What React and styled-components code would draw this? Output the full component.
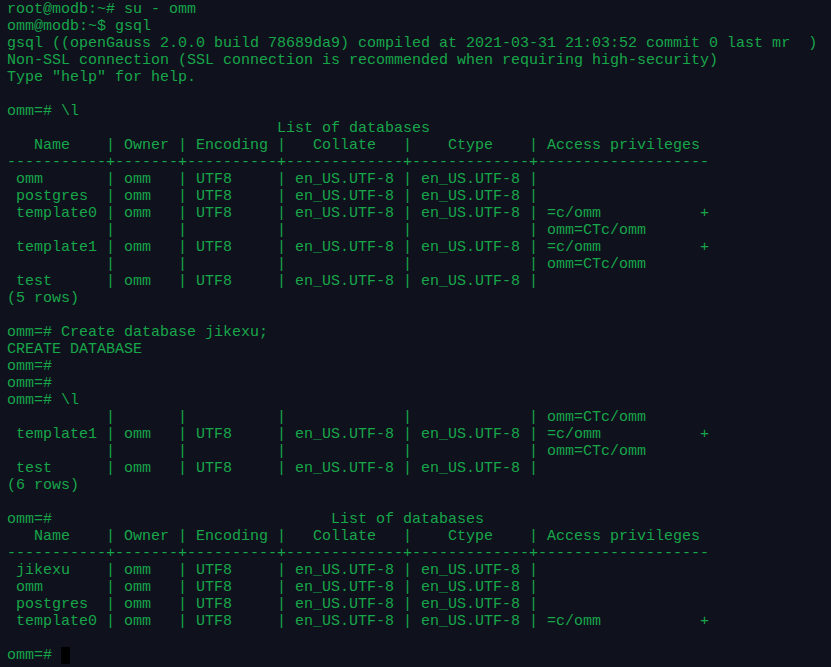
import React from "react";
import styled, { createGlobalStyle } from "styled-components";

const Global = createGlobalStyle`
  html, body {
    margin: 0;
    padding: 0;
    background: #0f111d;
  }
`;

const Terminal = styled.div`
  width: 831px;
  height: 667px;
  box-sizing: border-box;
  padding: 1px 0 0 7px;
  background: #0f111d;
  color: #18a64a;
  font-family: "Liberation Mono", "Courier New", monospace;
  font-size: 15px;
  line-height: 17px;
  overflow: hidden;
`;

const Line = styled.div`
  white-space: pre;
  height: 17px;
`;

const Cursor = styled.span`
  display: inline-block;
  width: 9px;
  height: 17px;
  vertical-align: top;
  background: #000000;
`;

const lines = [
  "root@modb:~# su - omm",
  "omm@modb:~$ gsql",
  "gsql ((openGauss 2.0.0 build 78689da9) compiled at 2021-03-31 21:03:52 commit 0 last mr  )",
  "Non-SSL connection (SSL connection is recommended when requiring high-security)",
  'Type "help" for help.',
  "",
  "omm=# \\l",
  "                              List of databases",
  "   Name    | Owner | Encoding |   Collate   |    Ctype    | Access privileges",
  "-----------+-------+----------+-------------+-------------+-------------------",
  " omm       | omm   | UTF8     | en_US.UTF-8 | en_US.UTF-8 |",
  " postgres  | omm   | UTF8     | en_US.UTF-8 | en_US.UTF-8 |",
  " template0 | omm   | UTF8     | en_US.UTF-8 | en_US.UTF-8 | =c/omm           +",
  "           |       |          |             |             | omm=CTc/omm",
  " template1 | omm   | UTF8     | en_US.UTF-8 | en_US.UTF-8 | =c/omm           +",
  "           |       |          |             |             | omm=CTc/omm",
  " test      | omm   | UTF8     | en_US.UTF-8 | en_US.UTF-8 |",
  "(5 rows)",
  "",
  "omm=# Create database jikexu;",
  "CREATE DATABASE",
  "omm=#",
  "omm=#",
  "omm=# \\l",
  "           |       |          |             |             | omm=CTc/omm",
  " template1 | omm   | UTF8     | en_US.UTF-8 | en_US.UTF-8 | =c/omm           +",
  "           |       |          |             |             | omm=CTc/omm",
  " test      | omm   | UTF8     | en_US.UTF-8 | en_US.UTF-8 |",
  "(6 rows)",
  "",
  "omm=#                               List of databases",
  "   Name    | Owner | Encoding |   Collate   |    Ctype    | Access privileges",
  "-----------+-------+----------+-------------+-------------+-------------------",
  " jikexu    | omm   | UTF8     | en_US.UTF-8 | en_US.UTF-8 |",
  " omm       | omm   | UTF8     | en_US.UTF-8 | en_US.UTF-8 |",
  " postgres  | omm   | UTF8     | en_US.UTF-8 | en_US.UTF-8 |",
  " template0 | omm   | UTF8     | en_US.UTF-8 | en_US.UTF-8 | =c/omm           +",
  "",
];

export default function App() {
  return (
    <>
      <Global />
      <Terminal>
        {lines.map((l, i) => (
          <Line key={i}>{l}</Line>
        ))}
        <Line>
          {"omm=# "}
          <Cursor />
        </Line>
      </Terminal>
    </>
  );
}
